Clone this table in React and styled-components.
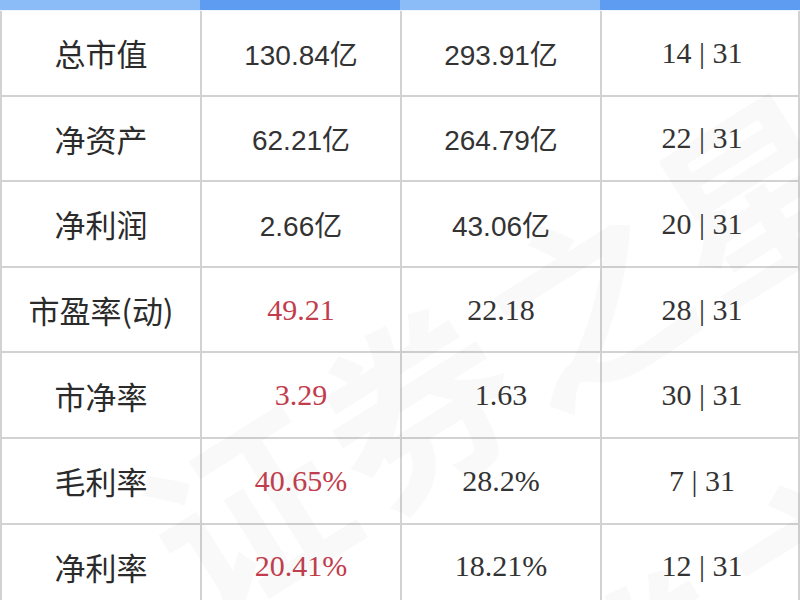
import React from "react";
import styled, { createGlobalStyle } from "styled-components";

const GlobalStyle = createGlobalStyle`
  html, body {
    margin: 0;
    padding: 0;
    background: #fff;
  }
  body {
    width: 800px;
    height: 600px;
    overflow: hidden;
    font-family: "Noto Sans CJK SC", "Noto Sans", sans-serif;
  }
`;

const Page = styled.div`
  position: relative;
  width: 800px;
  height: 600px;
  overflow: hidden;
  background: #fff;
`;

const HeadRow = styled.div`
  display: grid;
  grid-template-columns: 200px 200px 200px 200px;
`;

const HeadCell = styled.div`
  height: 10px;
  background: ${(p) => (p.$light ? "#8cbcf7" : "#5d9cf0")};
  border-bottom: 1px solid #eef5ff;
`;

const Table = styled.div`
  display: grid;
  grid-template-columns: 200px 200px 200px 200px;
  grid-auto-rows: 85.6px;
  box-sizing: border-box;
  border-left: 2px solid #d2d2d2;
  border-right: 2px solid #d2d2d2;
  width: 800px;
`;

const Cell = styled.div`
  display: flex;
  align-items: center;
  justify-content: center;
  box-sizing: border-box;
  border-bottom: 2px solid #d2d2d2;
  border-right: ${(p) => (p.$last ? "none" : "2px solid #d2d2d2")};
  color: ${(p) => (p.$red ? "#c23d4c" : "#333")};
  font-size: ${(p) => (p.$serif ? "30px" : "28px")};
  font-family: ${(p) =>
    p.$serif
      ? '"Liberation Serif", "Noto Sans CJK SC", serif'
      : '"Liberation Sans", "Noto Sans CJK SC", sans-serif'};
  white-space: nowrap;
`;

const Label = styled(Cell)`
  font-family: "Noto Sans CJK SC", sans-serif;
  font-size: 31px;
  color: #2b2b2b;
`;

const Watermark = styled.div`
  position: absolute;
  left: ${(p) => p.$x}px;
  top: ${(p) => p.$y}px;
  transform: rotate(-32deg);
  transform-origin: left top;
  font-family: "Noto Sans CJK SC", sans-serif;
  font-size: 190px;
  font-weight: 700;
  color: rgba(110, 110, 110, 0.04);
  white-space: nowrap;
  pointer-events: none;
  letter-spacing: 10px;
`;

const rows = [
  { label: "总市值", a: "130.84亿", b: "293.91亿", rank: "14 | 31" },
  { label: "净资产", a: "62.21亿", b: "264.79亿", rank: "22 | 31" },
  { label: "净利润", a: "2.66亿", b: "43.06亿", rank: "20 | 31" },
  { label: "市盈率(动)", a: "49.21", b: "22.18", rank: "28 | 31", red: true, serif: true },
  { label: "市净率", a: "3.29", b: "1.63", rank: "30 | 31", red: true, serif: true },
  { label: "毛利率", a: "40.65%", b: "28.2%", rank: "7 | 31", red: true, serif: true },
  { label: "净利率", a: "20.41%", b: "18.21%", rank: "12 | 31", red: true, serif: true },
];

export default function App() {
  return (
    <Page>
      <GlobalStyle />
      <HeadRow>
        <HeadCell $light />
        <HeadCell />
        <HeadCell $light />
        <HeadCell />
      </HeadRow>
      <Table>
        {rows.map((r) => (
          <React.Fragment key={r.label}>
            <Label>{r.label}</Label>
            <Cell $red={r.red} $serif={r.serif}>{r.a}</Cell>
            <Cell $serif={r.serif}>{r.b}</Cell>
            <Cell $serif $last>{r.rank}</Cell>
          </React.Fragment>
        ))}
      </Table>
      <Watermark $x={90} $y={440}>证券之星</Watermark>
      <Watermark $x={330} $y={700}>证券之星</Watermark>
    </Page>
  );
}
